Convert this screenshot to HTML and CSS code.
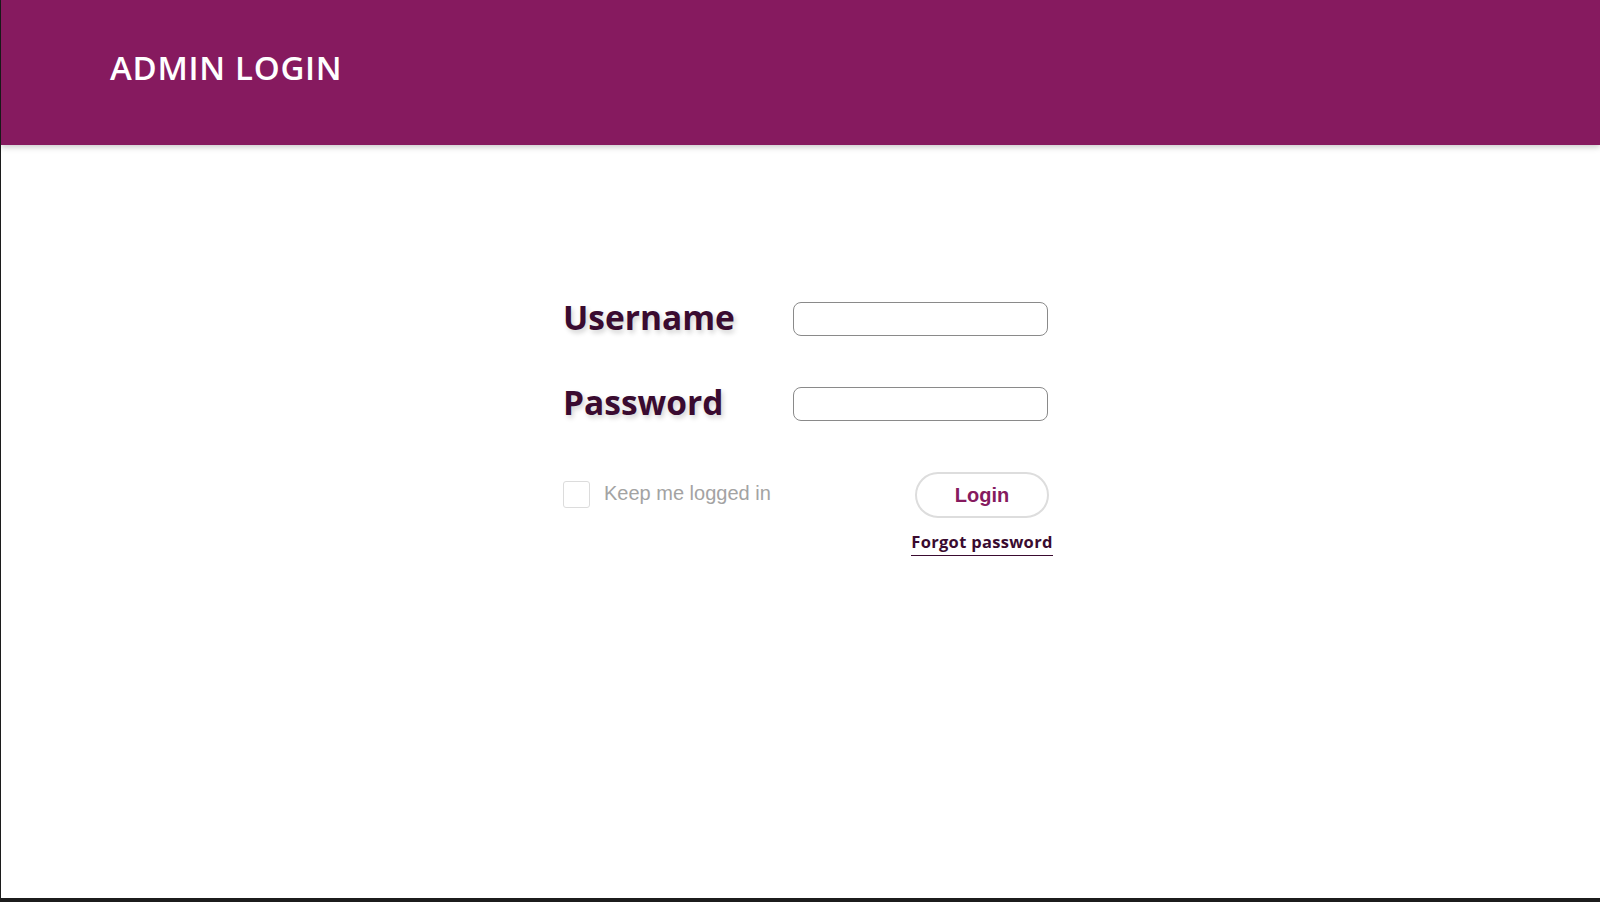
FILE: index.html
```html
<!DOCTYPE html>
<html lang="en">
<head>
<meta charset="utf-8">
<title>Admin Login</title>
<link rel="stylesheet" href="styles.css">
</head>
<body>
<div class="page">
  <header class="topbar">
    <h1 class="title">ADMIN LOGIN</h1>
  </header>
  <main class="main">
    <form class="login-form">
      <div class="field">
        <label class="label" for="username">Username</label>
        <input class="input" id="username" type="text">
      </div>
      <div class="field">
        <label class="label" for="password">Password</label>
        <input class="input" id="password" type="password">
      </div>
      <div class="actions">
        <label class="keep">
          <span class="checkbox"></span>
          <span class="keep-text">Keep me logged in</span>
        </label>
        <div class="submit-col">
          <button class="btn" type="button">Login</button>
          <a class="forgot" href="#">Forgot password</a>
        </div>
      </div>
    </form>
  </main>
</div>
</body>
</html>
```

FILE: styles.css
```css
html, body {
  margin: 0;
  padding: 0;
}
body {
  background: #1c1c1c;
  width: 1600px;
  height: 902px;
  overflow: hidden;
}
.page {
  margin-left: 1px;
  height: 898px;
  background: #ffffff;
  display: flex;
  flex-direction: column;
}
.topbar {
  height: 145px;
  background: #861a5f;
  box-shadow: 0 2px 6px rgba(0, 0, 0, 0.22);
  display: flex;
  align-items: flex-start;
  padding-left: 109px;
  box-sizing: border-box;
}
.title {
  margin: 0;
  padding-top: 46px;
  font-family: "Open Sans", sans-serif;
  font-weight: 600;
  font-size: 33px;
  line-height: 44px;
  color: #ffffff;
  letter-spacing: 0.7px;
}
.main {
  flex: 1;
  padding-left: 562px;
  padding-top: 157px;
}
.login-form {
  width: 490px;
  display: flex;
  flex-direction: column;
}
.field {
  display: flex;
  align-items: center;
  height: 34px;
  margin-bottom: 51px;
}
.label {
  width: 230px;
  margin-top: -4px;
  font-family: "Open Sans", sans-serif;
  font-weight: 700;
  font-size: 33.5px;
  color: #3a0b30;
  text-shadow: 2px 3px 5px rgba(0, 0, 0, 0.18);
}
.input {
  width: 255px;
  height: 34px;
  box-sizing: border-box;
  border: 1px solid #8a8a8a;
  border-radius: 8px;
  background: #fff;
  margin: 0;
  padding: 0 8px;
}
.actions {
  display: flex;
  justify-content: space-between;
  align-items: flex-start;
  margin-top: 0;
  width: 490px;
}
.keep {
  display: flex;
  align-items: center;
  margin-top: 9px;
}
.checkbox {
  width: 27px;
  height: 27px;
  box-sizing: border-box;
  border: 1px solid #dcdcdc;
  border-radius: 3px;
}
.keep-text {
  margin-left: 14px;
  font-family: "Liberation Sans", Arial, sans-serif;
  font-size: 20px;
  color: #a3a3a3;
  position: relative;
  top: -1px;
}
.submit-col {
  display: flex;
  flex-direction: column;
  align-items: center;
  width: 142px;
}
.btn {
  width: 134px;
  height: 46px;
  box-sizing: border-box;
  border: 2px solid #dddddd;
  border-radius: 23px;
  background: #fff;
  font-family: "Liberation Sans", Arial, sans-serif;
  font-weight: 700;
  font-size: 20px;
  color: #861a5f;
  padding: 0;
}
.forgot {
  margin-top: 12px;
  white-space: nowrap;
  font-family: "Open Sans", sans-serif;
  font-weight: 700;
  font-size: 16.5px;
  line-height: 23px;
  color: #3a0b30;
  text-decoration: none;
  border-bottom: 1.5px solid #3a0b30;
  padding-bottom: 2px;
  letter-spacing: 0.3px;
}
```
